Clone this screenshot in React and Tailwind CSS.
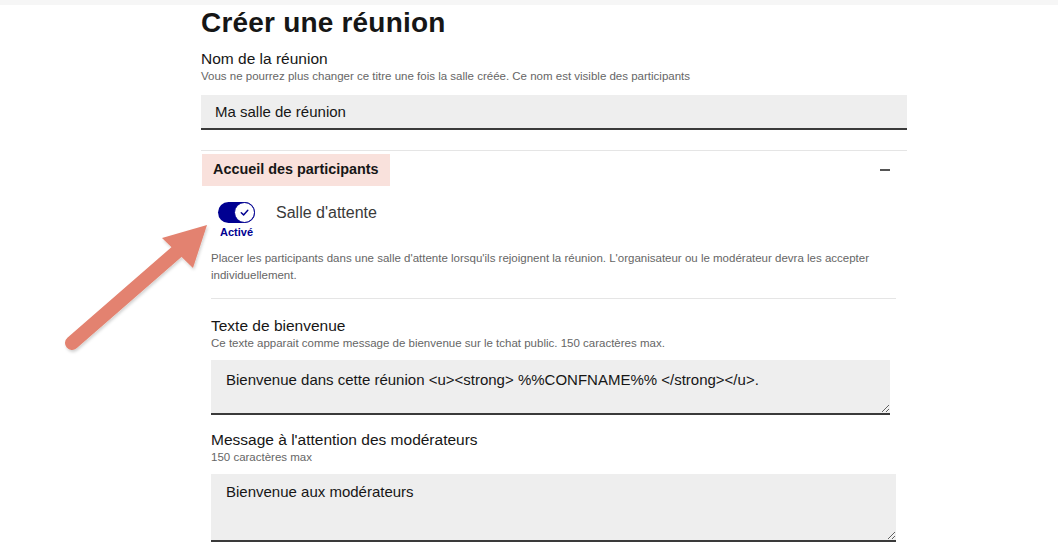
import React, { useState } from 'react';

const Field = ({ label, hint, children }) => (
  <div>
    <div className="text-[15.5px] leading-5 text-[#161616]">{label}</div>
    <div className="text-[11.5px] leading-[14px] text-[#666666]">{hint}</div>
    {children}
  </div>
);

const Arrow = () => (
  <svg className="absolute left-0 top-0 pointer-events-none" width="260" height="380" viewBox="0 0 260 380">
    <defs>
      <filter id="sh" x="-20%" y="-20%" width="140%" height="140%">
        <feDropShadow dx="1" dy="2" stdDeviation="1.5" floodColor="#000" floodOpacity="0.18" />
      </filter>
    </defs>
    <g filter="url(#sh)" fill="#e3826f">
      <line x1="72" y1="343" x2="180" y2="249" stroke="#e3826f" strokeWidth="14" strokeLinecap="round" />
      <polygon points="207,225 162,238 193,268" />
    </g>
  </svg>
);

export default function App() {
  const [waiting, setWaiting] = useState(true);
  const [open, setOpen] = useState(true);

  return (
    <div className="relative min-h-screen bg-white font-['Liberation_Sans',Arial,sans-serif] text-[#161616]">
      <div className="h-[5px] bg-[#f6f6f6]" />
      <div className="ml-[201px] w-[706px]">
        <h1 className="text-[28px] leading-9 font-bold tracking-[0.2px]">Créer une réunion</h1>

        <div className="mt-[8px]">
          <Field label="Nom de la réunion" hint="Vous ne pourrez plus changer ce titre une fois la salle créée. Ce nom est visible des participants">
            <input
              defaultValue="Ma salle de réunion"
              className="mt-3 block w-full h-[35px] bg-[#eeeeee] border-b-2 border-[#3a3a3a] px-[14px] text-[15px] text-[#161616] outline-none"
            />
          </Field>
        </div>

        <div className="mt-5 border-t border-[#e5e5e5]">
          <div className="flex items-center justify-between mt-[3px]">
            <button
              onClick={() => setOpen(!open)}
              className="h-8 ml-[1px] px-[11px] bg-[#f9e1dc] text-[14.4px] font-bold text-[#161616]"
            >
              Accueil des participants
            </button>
            <span className="mr-[17px] w-[10px] h-[1.5px] bg-[#555]" />
          </div>

          {open && (
            <div className="pl-[10px] pr-[11px]">
              <div className="flex items-start mt-4">
                <div className="ml-[7px] flex flex-col items-center">
                  <button
                    onClick={() => setWaiting(!waiting)}
                    className="relative w-[37px] h-[21px] rounded-full bg-[#000091]"
                  >
                    <span className="absolute right-0 top-0 w-[21px] h-[21px] rounded-full bg-white border border-[#000091] flex items-center justify-center">
                      <svg width="11" height="11" viewBox="0 0 12 12" fill="none" stroke="#000091" strokeWidth="1.6" strokeLinecap="round" strokeLinejoin="round">
                        <path d="M2.5 6.3 L5 8.6 L9.6 3.6" />
                      </svg>
                    </span>
                  </button>
                  <span className="mt-[3px] text-[11px] leading-3 font-bold text-[#000091]">Activé</span>
                </div>
                <span className="ml-[21px] mt-[1px] text-[16px] leading-5 text-[#3a3a3a]">Salle d'attente</span>
              </div>

              <p className="mt-[12px] text-[11.5px] leading-[17px] text-[#666666]">
                Placer les participants dans une salle d'attente lorsqu'ils rejoignent la réunion. L'organisateur ou le modérateur devra les accepter individuellement.
              </p>

              <div className="mt-[14px] border-t border-[#e5e5e5] pt-[17px]">
                <Field label="Texte de bienvenue" hint="Ce texte apparait comme message de bienvenue sur le tchat public. 150 caractères max.">
                  <textarea
                    defaultValue="Bienvenue dans cette réunion <u><strong> %%CONFNAME%% </strong></u>."
                    className="mt-[10px] block w-[679px] h-[55px] bg-[#eeeeee] border-b-2 border-[#3a3a3a] px-[15px] pt-[10px] text-[15px] leading-5 text-[#161616] outline-none resize-y"
                  />
                </Field>
              </div>

              <div className="mt-[15px]">
                <Field label="Message à l'attention des modérateurs" hint="150 caractères max">
                  <textarea
                    defaultValue="Bienvenue aux modérateurs"
                    className="mt-[10px] block w-full h-[68px] bg-[#eeeeee] border-b-2 border-[#3a3a3a] px-[15px] pt-[8px] text-[15px] leading-5 text-[#161616] outline-none resize-y"
                  />
                </Field>
              </div>
            </div>
          )}
        </div>
      </div>
      <Arrow />
    </div>
  );
}
